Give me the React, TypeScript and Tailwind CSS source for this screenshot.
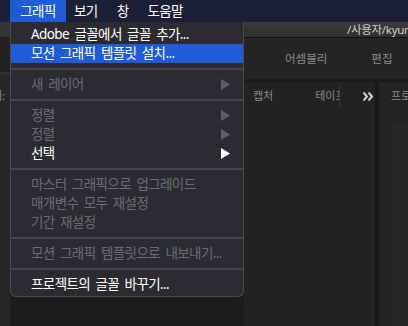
const FONT = '"Noto Sans", "Noto Sans CJK KR", sans-serif';

type Item =
  | { kind: "item"; label: string; disabled?: boolean; sub?: boolean; active?: boolean }
  | { kind: "sep" };

const items: Item[] = [
  { kind: "item", label: "Adobe 글꼴에서 글꼴 추가..." },
  { kind: "item", label: "모션 그래픽 템플릿 설치...", active: true },
  { kind: "sep" },
  { kind: "item", label: "새 레이어", disabled: true, sub: true },
  { kind: "sep" },
  { kind: "item", label: "정렬", disabled: true, sub: true },
  { kind: "item", label: "정렬", disabled: true, sub: true },
  { kind: "item", label: "선택", sub: true },
  { kind: "sep" },
  { kind: "item", label: "마스터 그래픽으로 업그레이드", disabled: true },
  { kind: "item", label: "매개변수 모두 재설정", disabled: true },
  { kind: "item", label: "기간 재설정", disabled: true },
  { kind: "sep" },
  { kind: "item", label: "모션 그래픽 템플릿으로 내보내기...", disabled: true },
  { kind: "sep" },
  { kind: "item", label: "프로젝트의 글꼴 바꾸기..." },
];

function Arrow({ color }: { color: string }) {
  return (
    <svg width="9" height="11" viewBox="0 0 9 11" className="shrink-0">
      <path d="M0 0 L9 5.5 L0 11 Z" fill={color} />
    </svg>
  );
}

function Chevrons() {
  return (
    <svg width="10" height="9" viewBox="0 0 10 9">
      <path d="M0.5 0.5 L4 4.5 L0.5 8.5 M5.5 0.5 L9 4.5 L5.5 8.5" stroke="#d0d0d0" strokeWidth="2" fill="none" />
    </svg>
  );
}

function Menu() {
  return (
    <div className="w-[234px] bg-[#2b2c30] border border-t-0 border-[#4a4b4f] rounded-b-[6px] pt-[3px] pb-[2px]">
      {items.map((it, i) =>
        it.kind === "sep" ? (
          <div key={i} className="h-[12px] flex items-center">
            <div className="h-[2px] w-full bg-[#45464a]" />
          </div>
        ) : (
          <div
            key={i}
            className={
              "h-[19px] flex items-center text-[13.5px] tracking-[-0.6px] [word-spacing:2.5px] " +
              (it.active ? "bg-[#1f5cd9] text-white" : it.disabled ? "text-[#6c6d71]" : "text-white")
            }
          >
            <span className="w-5 shrink-0" />
            <span className="flex-1 whitespace-nowrap">{it.label}</span>
            {it.sub && <Arrow color={it.disabled ? "#5e5f63" : "#ffffff"} />}
            <span className="w-[13px] shrink-0" />
          </div>
        )
      )}
    </div>
  );
}

export default function App() {
  return (
    <div className="w-[408px] h-[326px] overflow-hidden flex flex-col bg-[#1e1e1e]" style={{ fontFamily: FONT }}>
      <div className="h-[22px] bg-[#1b2036] flex items-stretch text-white text-[13.5px] tracking-[-0.6px] shrink-0">
        <div className="w-[10px] shrink-0" />
        <div className="bg-[#1f5cd9] w-[56px] flex items-center justify-center">그래픽</div>
        <div className="flex items-center pl-[8px]">보기</div>
        <div className="flex items-center pl-[19px]">창</div>
        <div className="flex items-center pl-[19px]">도움말</div>
      </div>

      <div className="flex flex-1 min-h-0">
        <div className="w-[10px] shrink-0 flex flex-col overflow-hidden">
          <div className="h-[15px] bg-[#353535]" />
          <div className="h-[35px] bg-[#222222]" />
          <div className="h-[3px] bg-[#303030]" />
          <div className="flex-1 bg-[#262626] pt-[13px]">
            <div className="text-[11px] text-[#8a8a8a] -ml-[8px] whitespace-nowrap">새:</div>
          </div>
        </div>

        <div className="flex flex-col shrink-0">
          <Menu />
          <div className="flex-1 bg-[#1c1c1c]" />
        </div>

        <div className="flex-1 flex flex-col min-w-0 bg-[#1a1a1a]">
          <div className="h-[16px] bg-gradient-to-b from-[#3c3c3c] to-[#2f2f2f] border-b border-[#111] flex items-center overflow-hidden">
            <span className="ml-[103px] text-[11.5px] tracking-[-0.3px] text-[#cfcfcf] whitespace-nowrap">/사용자/kyunghoon</span>
          </div>
          <div className="h-[41px] bg-[#242424] flex items-center text-[11.5px] text-[#8c8c8c] whitespace-nowrap">
            <span className="ml-[41px]">어셈블리</span>
            <span className="ml-[44px]">편집</span>
          </div>
          <div className="h-[3px] bg-[#1a1a1a]" />
          <div className="flex-1 flex gap-[4px] bg-[#191919] min-h-0">
            <div className="w-[131px] shrink-0 bg-[#222222] flex flex-col">
              <div className="h-[28px] flex items-center text-[11px] text-[#8a8a8a] whitespace-nowrap">
                <span className="ml-[9px]">캡처</span>
                <span className="ml-[42px] w-[24px] overflow-hidden">테이프</span>
                <div className="w-px h-[20px] bg-[#3c3c3c]" />
                <span className="ml-[23px] flex items-center">
                  <Chevrons />
                </span>
              </div>
            </div>
            <div className="flex-1 min-w-0 bg-[#232323] flex flex-col overflow-hidden">
              <div className="h-[28px] flex items-center text-[11px] text-[#8a8a8a] whitespace-nowrap">
                <span className="ml-[12px]">프로젝트</span>
              </div>
              <div className="flex-1 ml-[13px] mt-[13px] bg-[#262626]" />
            </div>
          </div>
        </div>
      </div>
    </div>
  );
}
